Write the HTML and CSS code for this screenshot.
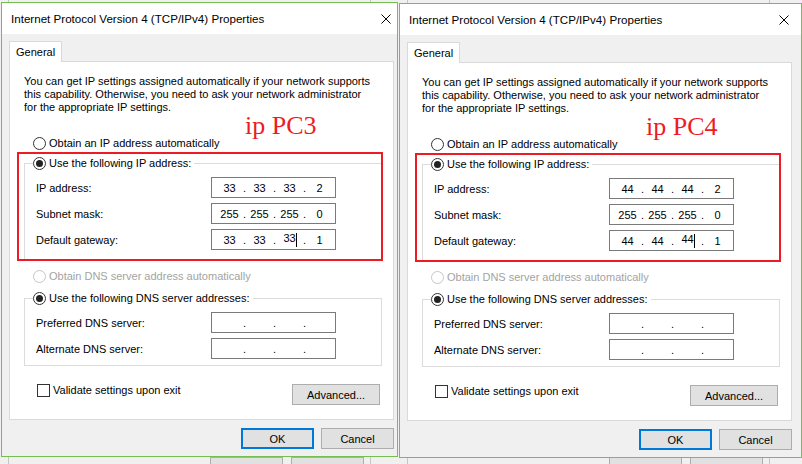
FILE: index.html
```html
<!DOCTYPE html>
<html>
<head>
<meta charset="utf-8">
<title>IPv4 Properties</title>
<link rel="stylesheet" href="styles.css">
</head>
<body>
<div class="desktop">
  <div class="bgwin bgwin-left">
    <div class="bgwin-buttons"><span class="btn bg-btn">OK</span><span class="btn bg-btn">Cancel</span></div>
  </div>
  <div class="bgwin bgwin-right">
    <div class="bgwin-buttons"><span class="btn bg-btn">OK</span><span class="btn bg-btn">Cancel</span></div>
  </div>

  <section class="dialog dialog-left">
    <div class="inner">
      <header class="titlebar">
        <span class="title">Internet Protocol Version 4 (TCP/IPv4) Properties</span>
        <svg class="close" width="10" height="10" viewBox="0 0 10 10"><path d="M0.5 0.5L9.5 9.5M9.5 0.5L0.5 9.5" stroke="#000" stroke-width="1" fill="none"/></svg>
      </header>
      <div class="body">
        <div class="tab">General</div>
        <div class="panel">
          <p class="intro">You can get IP settings assigned automatically if your network supports<br>this capability. Otherwise, you need to ask your network administrator<br>for the appropriate IP settings.</p>
          <div class="option option-first"><span class="radio"></span><span>Obtain an IP address automatically</span></div>
          <fieldset class="group group-ip">
            <legend class="legend"><span class="radio checked"></span><span>Use the following IP address:</span></legend>
            <div class="rows">
              <div class="row"><span class="label">IP address:</span><span class="ipfield"><span class="seg">33</span><span class="dot">.</span><span class="seg">33</span><span class="dot">.</span><span class="seg">33</span><span class="dot">.</span><span class="seg">2</span></span></div>
              <div class="row"><span class="label">Subnet mask:</span><span class="ipfield"><span class="seg">255</span><span class="dot">.</span><span class="seg">255</span><span class="dot">.</span><span class="seg">255</span><span class="dot">.</span><span class="seg">0</span></span></div>
              <div class="row"><span class="label">Default gateway:</span><span class="ipfield"><span class="seg">33</span><span class="dot">.</span><span class="seg">33</span><span class="dot">.</span><span class="seg">33<span class="caret"></span></span><span class="dot">.</span><span class="seg">1</span></span></div>
            </div>
          </fieldset>
          <div class="option option-dns disabled"><span class="radio"></span><span>Obtain DNS server address automatically</span></div>
          <fieldset class="group group-dns">
            <legend class="legend"><span class="radio checked"></span><span>Use the following DNS server addresses:</span></legend>
            <div class="rows">
              <div class="row"><span class="label">Preferred DNS server:</span><span class="ipfield"><span class="seg"></span><span class="dot">.</span><span class="seg"></span><span class="dot">.</span><span class="seg"></span><span class="dot">.</span><span class="seg"></span></span></div>
              <div class="row"><span class="label">Alternate DNS server:</span><span class="ipfield"><span class="seg"></span><span class="dot">.</span><span class="seg"></span><span class="dot">.</span><span class="seg"></span><span class="dot">.</span><span class="seg"></span></span></div>
            </div>
          </fieldset>
          <div class="footer-row">
            <span class="check"><span class="checkbox"></span><span>Validate settings upon exit</span></span>
            <span class="btn btn-advanced">Advanced...</span>
          </div>
          <div class="highlight"></div>
          <div class="note">ip PC3</div>
        </div>
        <div class="actions"><span class="btn btn-ok">OK</span><span class="btn btn-cancel">Cancel</span></div>
      </div>
    </div>
  </section>

  <section class="dialog dialog-right">
    <div class="inner">
      <header class="titlebar">
        <span class="title">Internet Protocol Version 4 (TCP/IPv4) Properties</span>
        <svg class="close" width="10" height="10" viewBox="0 0 10 10"><path d="M0.5 0.5L9.5 9.5M9.5 0.5L0.5 9.5" stroke="#000" stroke-width="1" fill="none"/></svg>
      </header>
      <div class="body">
        <div class="tab">General</div>
        <div class="panel">
          <p class="intro">You can get IP settings assigned automatically if your network supports<br>this capability. Otherwise, you need to ask your network administrator<br>for the appropriate IP settings.</p>
          <div class="option option-first"><span class="radio"></span><span>Obtain an IP address automatically</span></div>
          <fieldset class="group group-ip">
            <legend class="legend"><span class="radio checked"></span><span>Use the following IP address:</span></legend>
            <div class="rows">
              <div class="row"><span class="label">IP address:</span><span class="ipfield"><span class="seg">44</span><span class="dot">.</span><span class="seg">44</span><span class="dot">.</span><span class="seg">44</span><span class="dot">.</span><span class="seg">2</span></span></div>
              <div class="row"><span class="label">Subnet mask:</span><span class="ipfield"><span class="seg">255</span><span class="dot">.</span><span class="seg">255</span><span class="dot">.</span><span class="seg">255</span><span class="dot">.</span><span class="seg">0</span></span></div>
              <div class="row"><span class="label">Default gateway:</span><span class="ipfield"><span class="seg">44</span><span class="dot">.</span><span class="seg">44</span><span class="dot">.</span><span class="seg">44<span class="caret"></span></span><span class="dot">.</span><span class="seg">1</span></span></div>
            </div>
          </fieldset>
          <div class="option option-dns disabled"><span class="radio"></span><span>Obtain DNS server address automatically</span></div>
          <fieldset class="group group-dns">
            <legend class="legend"><span class="radio checked"></span><span>Use the following DNS server addresses:</span></legend>
            <div class="rows">
              <div class="row"><span class="label">Preferred DNS server:</span><span class="ipfield"><span class="seg"></span><span class="dot">.</span><span class="seg"></span><span class="dot">.</span><span class="seg"></span><span class="dot">.</span><span class="seg"></span></span></div>
              <div class="row"><span class="label">Alternate DNS server:</span><span class="ipfield"><span class="seg"></span><span class="dot">.</span><span class="seg"></span><span class="dot">.</span><span class="seg"></span><span class="dot">.</span><span class="seg"></span></span></div>
            </div>
          </fieldset>
          <div class="footer-row">
            <span class="check"><span class="checkbox"></span><span>Validate settings upon exit</span></span>
            <span class="btn btn-advanced">Advanced...</span>
          </div>
          <div class="highlight"></div>
          <div class="note">ip PC4</div>
        </div>
        <div class="actions"><span class="btn btn-ok">OK</span><span class="btn btn-cancel">Cancel</span></div>
      </div>
    </div>
  </section>
</div>
</body>
</html>
```

FILE: styles.css
```css
* { box-sizing: border-box; }
html, body { margin: 0; padding: 0; }
body {
  width: 802px;
  height: 464px;
  overflow: hidden;
  background: #f0f0f0;
  font-family: "Liberation Sans", Arial, sans-serif;
  font-size: 11px;
  color: #000;
}
.desktop { position: relative; width: 802px; height: 464px; overflow: hidden; }

.bgwin {
  position: absolute;
  top: -20px;
  width: 363px;
  height: 520px;
  background: #f0f0f0;
  border: 1px solid #c6c6c6;
  padding: 476px 0 0 201px;
}
.bgwin-left { left: 8px; }
.bgwin-right { left: 407px; }
.bgwin-buttons { display: flex; gap: 8px; }
.bg-btn { width: 73px; }

.dialog {
  position: absolute;
  top: 2px;
  height: 455px;
  border: 1px solid #74bf50;
  background: #f0f0f0;
  overflow: hidden;
}
.dialog-left { left: 1px; width: 397px; }
.dialog-right { left: 399px; top: 3px; width: 403px; }
.inner { width: 401px; }

.titlebar {
  display: flex;
  align-items: center;
  height: 31px;
  background: #fff;
  padding-left: 9px;
}
.title { flex: 1; font-size: 11.6px; line-height: 31px; white-space: nowrap; }
.close { flex: none; margin-right: 12px; }

.body { padding: 7px 0 0 7px; }
.tab {
  position: relative;
  z-index: 1;
  width: 53px;
  height: 21px;
  margin-bottom: -1px;
  padding-left: 6px;
  line-height: 20px;
  background: #fff;
  border: 1px solid #d9d9d9;
  border-bottom: 0;
}
.panel {
  position: relative;
  width: 385px;
  height: 359px;
  background: #fff;
  border: 1px solid #d9d9d9;
}
.intro { margin: 13px 0 0 14px; line-height: 13px; white-space: nowrap; }

.option {
  display: flex;
  align-items: center;
  height: 13px;
  line-height: 13px;
  margin-left: 23px;
  white-space: nowrap;
}
.option-first { margin-top: 23px; }
.option-dns { margin-top: 10px; }
.disabled { color: #a3a3a3; }
.disabled .radio { border-color: #c6c6c6; }

.radio {
  flex: none;
  display: flex;
  align-items: center;
  justify-content: center;
  width: 13px;
  height: 13px;
  margin-right: 3px;
  border: 1px solid #333;
  border-radius: 50%;
  background: #fff;
}
.radio.checked::after {
  content: "";
  width: 7px;
  height: 7px;
  border-radius: 50%;
  background: #222;
}

.group {
  width: 358px;
  min-width: 0;
  margin: 7px 0 0 14px;
  padding: 7px 0 9px 8px;
  border: 1px solid #dcdcdc;
}
.group-dns { margin-top: 9px; padding-bottom: 6px; }
.legend {
  display: flex;
  align-items: center;
  height: 13px;
  line-height: 13px;
  margin: 0;
  padding: 0 3px 0 0;
  background: #fff;
  white-space: nowrap;
}
.rows { display: flex; flex-direction: column; gap: 5px; }
.row { display: flex; align-items: center; height: 21px; }
.label { width: 178px; padding-left: 3px; white-space: nowrap; }
.ipfield {
  display: flex;
  align-items: center;
  width: 125px;
  height: 21px;
  padding-left: 6px;
  border: 1px solid #7a7a7a;
  background: #fff;
}
.seg { width: 23px; text-align: center; white-space: nowrap; }
.dot { width: 7px; text-align: center; }
.caret {
  display: inline-block;
  width: 1px;
  height: 14px;
  margin-right: -1px;
  vertical-align: middle;
  background: #000;
}

.footer-row {
  display: flex;
  align-items: flex-start;
  margin-top: 18px;
  padding-left: 27px;
}
.check { display: flex; align-items: center; height: 13px; line-height: 13px; white-space: nowrap; }
.checkbox {
  flex: none;
  width: 13px;
  height: 13px;
  margin-right: 3px;
  border: 1px solid #333;
  background: #fff;
}

.btn {
  display: flex;
  align-items: center;
  justify-content: center;
  height: 21px;
  border: 1px solid #adadad;
  background: #e1e1e1;
  white-space: nowrap;
}
.btn-advanced { width: 88px; margin-left: auto; margin-right: 13px; }
.actions { display: flex; gap: 7px; margin: 8px 0 0 232px; }
.btn-ok, .btn-cancel { width: 73px; }
.btn-ok { border: 2px solid #0078d7; }

.highlight {
  position: absolute;
  left: 7px;
  top: 90px;
  width: 366px;
  height: 109px;
  border: 2px solid #ed1c24;
  pointer-events: none;
}
.note {
  position: absolute;
  left: 235px;
  top: 51px;
  font-family: "Liberation Serif", serif;
  font-size: 26px;
  line-height: 26px;
  color: #ed1c24;
  white-space: nowrap;
}
.dialog-right .note { left: 238px; }
```
